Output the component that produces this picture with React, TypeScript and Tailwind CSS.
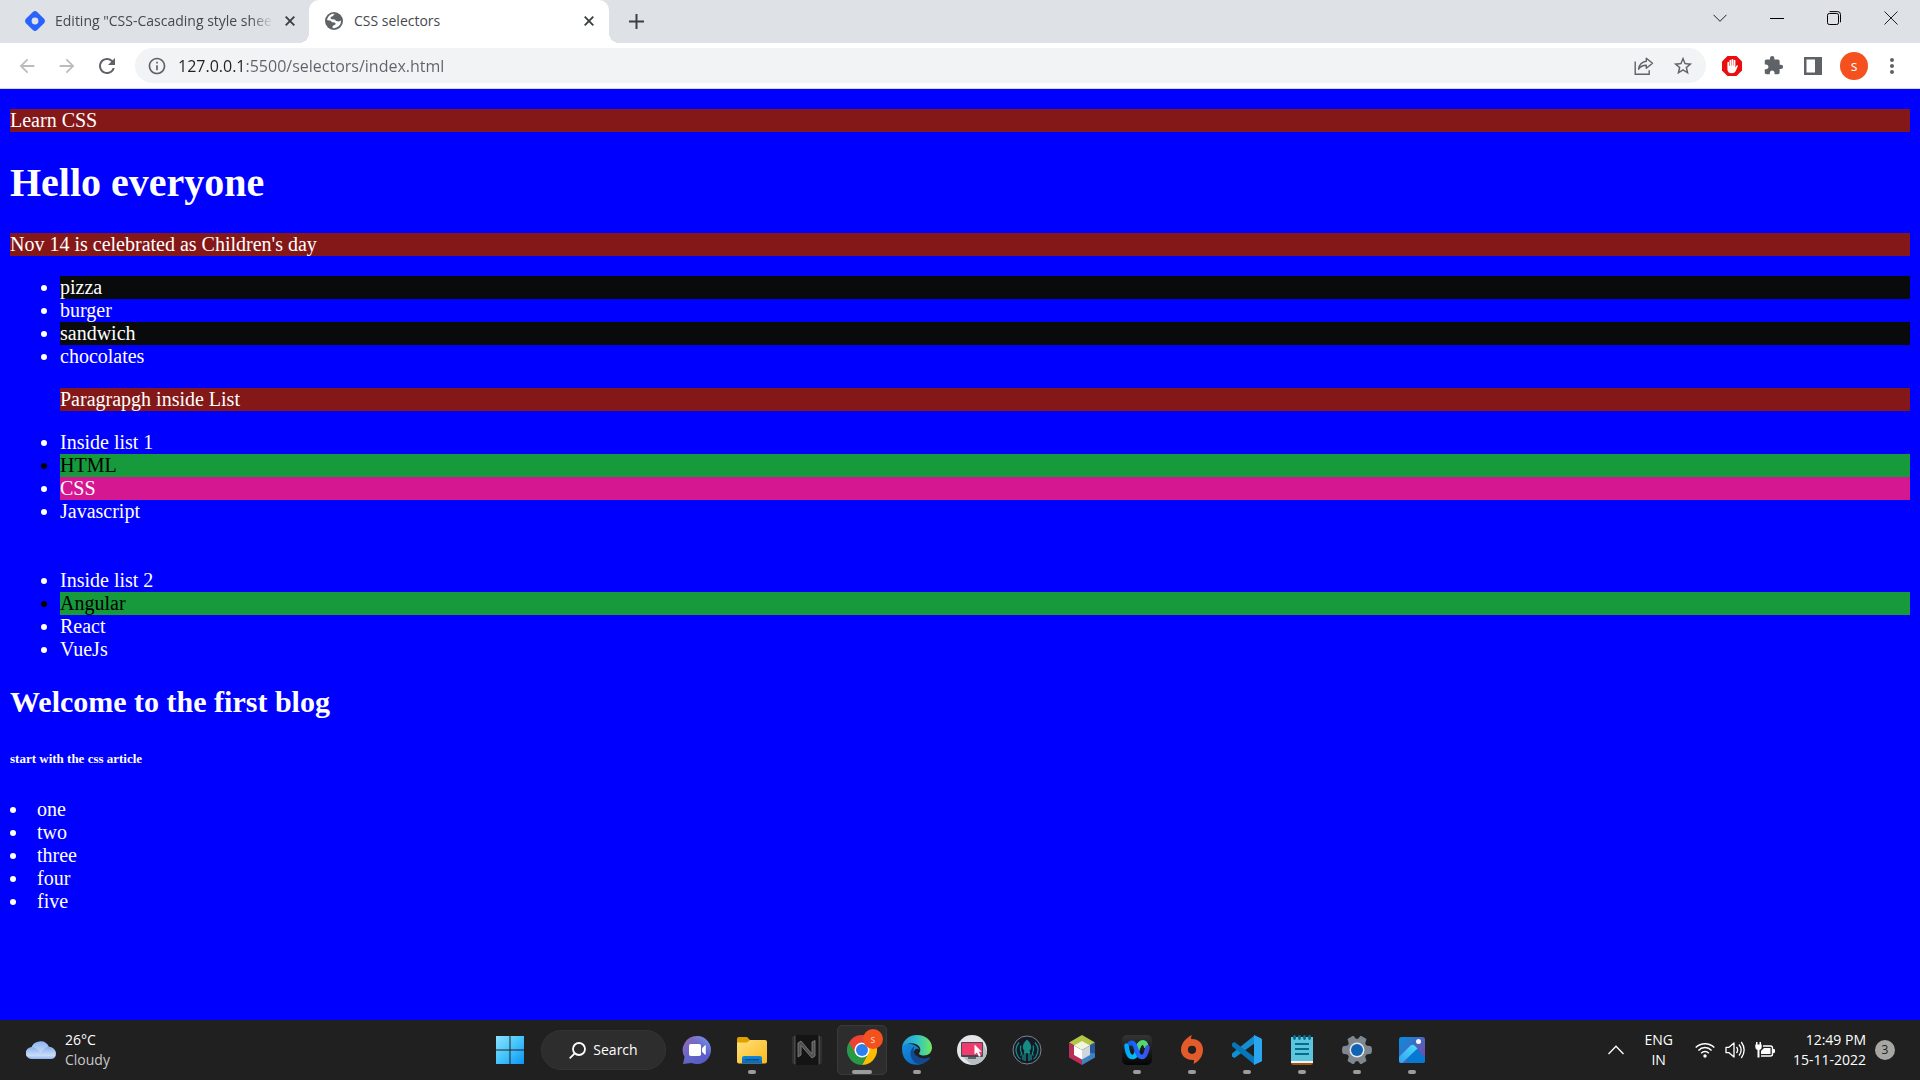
import { useState } from 'react';
import type { ReactNode } from 'react';
import { MdArrowBack, MdArrowForward, MdExtension, MdInfoOutline, MdMoreVert, MdRefresh, MdStarBorder } from 'react-icons/md';

const DiamondLogo = () => (
  <svg viewBox="0 0 20 20" className="size-5 shrink-0">
    <path d="M7.6 1.2a3.4 3.4 0 0 1 4.8 0l6.4 6.4a3.4 3.4 0 0 1 0 4.8l-6.4 6.4a3.4 3.4 0 0 1-4.8 0l-6.4-6.4a3.4 3.4 0 0 1 0-4.8z" fill="#2962ff" />
    <circle cx="10" cy="10" r="3.4" fill="#dee1e6" />
  </svg>
);

const Globe = () => (
  <svg viewBox="0 0 18 18" className="size-[18px] shrink-0">
    <circle cx="9" cy="9" r="9" fill="#5f6368" />
    <path d="M10 1.900Q8 2.500 8.200 4L5.800 5q-.9 1.600.8 2.200l3 .2 1.600 1.700 2.300.4q1.600-.2 2.600-.9A7.200 7.200 0 0 1 7.600 16v-2.100l2.800-1.500q.8-1.300-.9-1.800L7 10.300 5.600 8.700 1.900 8A7.200 7.200 0 0 1 10 1.900z" fill="#fff" />
  </svg>
);

const Cross = () => (
  <svg viewBox="0 0 10 10" className="size-[10px]" stroke="#3c4043" strokeWidth="1.9">
    <path d="M0.7 0.7l8.6 8.6M9.3 0.7L0.7 9.3" />
  </svg>
);

function TabStrip() {
  return (
    <div className="flex h-[43px] bg-[#dee1e6]">
      <div className="flex w-[309px] items-center pb-[2px] pl-[25px] pr-[9px]">
        <DiamondLogo />
        <button className="ml-[10px] whitespace-nowrap text-left text-[14px] text-[#45494d] [mask-image:linear-gradient(to_right,black_195px,transparent_218px)]">
          Editing "CSS-Cascading style shee
        </button>
        <button aria-label="Close tab" className="ml-auto flex size-5 items-center justify-center"><Cross /></button>
      </div>
      <div className="relative flex w-[300px] items-center rounded-t-[10px] bg-white pb-[2px] pl-4 pr-[10px]">
        <span className="absolute bottom-0 -left-[10px] size-[10px] bg-[radial-gradient(circle_at_0_0,#dee1e6_10px,#ffffff_10px)]" />
        <span className="absolute bottom-0 -right-[10px] size-[10px] bg-[radial-gradient(circle_at_100%_0,#dee1e6_10px,#ffffff_10px)]" />
        <Globe />
        <button className="ml-[11px] text-[14px] text-[#45494d]">CSS selectors</button>
        <button aria-label="Close tab" className="ml-auto flex size-5 items-center justify-center"><Cross /></button>
      </div>
      <button aria-label="New tab" className="ml-3 flex w-[30px] items-center justify-center">
        <svg viewBox="0 0 15 15" className="size-[15px]" stroke="#3c4043" strokeWidth="2"><path d="M7.5 0v15M0 7.5h15" /></svg>
      </button>
      <div className="ml-auto flex h-9 items-center">
        <button aria-label="Search tabs" className="flex w-[57px] justify-center">
          <svg viewBox="0 0 14 14" className="size-[14px]" fill="none" stroke="#202124"><path d="M0.5 3.8L7 10.3l6.5-6.5" /></svg>
        </button>
        <button aria-label="Minimize" className="flex w-[57px] justify-center">
          <svg viewBox="0 0 14 14" className="size-[14px]" stroke="#000"><path d="M0 7.5h14" /></svg>
        </button>
        <button aria-label="Restore" className="flex w-[57px] justify-center">
          <svg viewBox="0 0 14 14" className="size-[14px]" fill="none" stroke="#000">
            <rect x="0.5" y="2.5" width="11" height="11" rx="1.8" />
            <path d="M2.6 0.6h8a2.9 2.9 0 0 1 2.9 2.9v7.8" />
          </svg>
        </button>
        <button aria-label="Close" className="flex w-[58px] justify-center">
          <svg viewBox="0 0 14 14" className="size-[14px]" stroke="#202124"><path d="M0.5 0.5l13 13M13.5 0.5l-13 13" /></svg>
        </button>
      </div>
    </div>
  );
}

function Toolbar() {
  const [url, setUrl] = useState('127.0.0.1:5500/selectors/index.html');

  return (
    <div className="flex h-[46px] items-center border-b border-[#d5d7da] bg-white pl-4 pr-4 text-[#5f6368]">
      <button aria-label="Back" className="mr-[18px] text-[#babcbe]"><MdArrowBack className="size-[22px]" /></button>
      <button aria-label="Forward" className="mr-[17px] text-[#babcbe]"><MdArrowForward className="size-[22px]" /></button>
      <button aria-label="Reload"><MdRefresh className="size-6" /></button>
      <div className="ml-4 flex h-[35px] flex-1 items-center gap-[18px] rounded-full bg-[#f1f3f4] pl-3 pr-3">
        <button aria-label="Site information"><MdInfoOutline className="size-5" /></button>
        <input
          aria-label="Address"
          className="-ml-[7px] min-w-0 flex-1 bg-[linear-gradient(to_right,#202124_68px,#5f6368_68px)] bg-clip-text text-[16px] text-transparent outline-none"
          value={url}
          onChange={e => setUrl(e.target.value)}
        />
        <button aria-label="Share">
          <svg viewBox="0 0 20 20" className="size-5" fill="none" stroke="#5f6368" strokeWidth="1.4">
            <path d="M1.2 5.5v12.8h14v-4" />
            <path d="M12.3 2.2l6.2 5-6.2 5V9.3c-3.6 0-6 1.2-7.7 3.9.5-4.4 3-7.4 7.7-8z" strokeLinejoin="round" />
          </svg>
        </button>
        <button aria-label="Bookmark"><MdStarBorder className="size-[22px]" /></button>
      </div>
      <div className="ml-[15px] flex items-center gap-5">
        <button aria-label="Ad blocker">
          <svg viewBox="0 0 22 22" className="size-[22px]">
            <path d="M6.5 1h9L21 6.500v9L15.500 21h-9L1 15.500v-9z" fill="#eb0d0d" />
            <path d="M6.400 12V7.200q.8-1 1.600 0V11h.5V5.200q.8-1 1.700 0V10.500h.4V4.400q.8-1 1.700 0V10.500h.4V5.300q.9-1 1.700 0v7.200l1.200-2q1-.7 1.400.3l-2.400 5.400q-1.100 2-3.800 2-4.400 0-4.400-4.200z" fill="#fff" />
          </svg>
        </button>
        <button aria-label="Extensions"><MdExtension className="size-[21px]" /></button>
        <button aria-label="Side panel">
          <svg viewBox="0 0 18 18" className="size-[18px]">
            <path d="M0 0h18v18H0zM2.500 2.500v13H11v-13z" fill="#5f6368" fillRule="evenodd" />
          </svg>
        </button>
        <button className="ml-[-2px] flex size-7 items-center justify-center rounded-full bg-[#f4511e] text-[14px] text-white">s</button>
        <button aria-label="Menu" className="-ml-2"><MdMoreVert className="size-6" /></button>
      </div>
    </div>
  );
}

function Page() {
  return (
    <main className="flex-1 bg-[#0000ff] px-[10px] pt-5 font-['Liberation_Serif','Times_New_Roman',serif] text-[20px] leading-[23px] text-white">
      <p className="bg-[#841818]">Learn CSS</p>
      <h1 className="my-[27px] text-[40px] font-bold leading-[47px]">Hello everyone</h1>
      <p className="bg-[#841818]">Nov 14 is celebrated as Children's day</p>
      <ul className="mt-5 list-disc pl-[50px]">
        <li className="bg-[#080a0b]">pizza</li>
        <li>burger</li>
        <li className="bg-[#080a0b]">sandwich</li>
        <li>chocolates</li>
        <p className="my-5 bg-[#841818]">Paragrapgh inside List</p>
        <li>Inside list 1</li>
        <li className="bg-[#179a3c] text-black">HTML</li>
        <li className="bg-[#d61792]">CSS</li>
        <li>Javascript</li>
        <br />
        <br />
        <li>Inside list 2</li>
        <li className="bg-[#179a3c] text-black">Angular</li>
        <li>React</li>
        <li>VueJs</li>
      </ul>
      <h2 className="mt-6 mb-8 text-[30px] font-bold leading-[34px]">Welcome to the first blog</h2>
      <h6 className="mb-[31px] text-[13px] font-bold leading-4">start with the css article</h6>
      <ul className="list-inside list-disc">
        <li>one</li>
        <li>two</li>
        <li>three</li>
        <li>four</li>
        <li>five</li>
      </ul>
    </main>
  );
}

const Icon = ({ children }: { children: ReactNode }) => (
  <svg viewBox="0 0 30 30" className="size-[30px]">{children}</svg>
);

const apps = [
  {
    name: 'Chat',
    icon: (
      <Icon>
        <defs>
          <linearGradient id="chat" x1="0" y1="0" x2="1" y2="1">
            <stop offset="0" stopColor="#9a6cb8" />
            <stop offset="0.5" stopColor="#6264c8" />
            <stop offset="1" stopColor="#5558c8" />
          </linearGradient>
          <linearGradient id="chatEdge" x1="0" y1="1" x2="1" y2="0">
            <stop offset="0.6" stopColor="#7a9cf0" stopOpacity="0" />
            <stop offset="1" stopColor="#7aa2f5" />
          </linearGradient>
        </defs>
        <path d="M15 1a14 14 0 1 1-5.500 26.900L1 29l1.600-7A14 14 0 0 1 15 1z" fill="url(#chat)" />
        <path d="M15 1a14 14 0 1 1-5.500 26.900L1 29l1.600-7A14 14 0 0 1 15 1z" fill="url(#chatEdge)" />
        <rect x="7" y="9" width="12" height="12" rx="1.800" fill="#fff" />
        <path d="M20 13.200l3-2.900q.8-.4.8.6v8.200q0 1-.8.6l-3-2.900z" fill="#fff" />
      </Icon>
    )
  },
  {
    name: 'File Explorer',
    running: true,
    icon: (
      <Icon>
        <defs>
          <linearGradient id="folder" x1="0" y1="0" x2="1" y2="1"><stop stopColor="#ffe07a" /><stop offset="1" stopColor="#fbb91a" /></linearGradient>
          <linearGradient id="folderPocket" x1="0" y1="0" x2="0" y2="1"><stop stopColor="#1287d8" /><stop offset="1" stopColor="#0b67b5" /></linearGradient>
        </defs>
        <path d="M0 4q0-2 2-2h8l3 3v5H0z" fill="#e0a000" />
        <path d="M0 7.500h10L13 5h15q2 0 2 2v19.500q0 2-2 2H2q-2 0-2-2z" fill="url(#folder)" />
        <path d="M5 28.500v-5.500q0-2 2-2h16q2 0 2 2v5.500z" fill="url(#folderPocket)" />
        <path d="M8 24.700h14" stroke="#064f91" strokeWidth="1.300" />
      </Icon>
    )
  },
  {
    name: 'Nitro',
    icon: (
      <Icon>
        <path d="M0 2l4-2v30l-4-2zM30 2l-4-2v30l4-2z" fill="#303030" />
        <path d="M2.500 1v28M27.500 1v28" stroke="#555" strokeWidth="0.700" />
        <rect x="4" width="22" height="30" fill="#141414" />
        <path d="M6 22V8l3-2 11 13V7l3-1.500V21l-3 2L9 10.500V20z" fill="#505050" stroke="#858585" strokeWidth="0.800" />
      </Icon>
    )
  },
  {
    name: 'Chrome',
    running: true,
    active: true,
    icon: (
      <Icon>
        <path d="M28 7.500A15 15 0 0 1 15 30l6-11.500 1-11z" fill="#fbbc04" />
        <path d="M2 7.500A15 15 0 0 0 15 30l6.100-11.500-6.100-3.500z" fill="#279a48" />
        <path d="M2 7.500A15 15 0 0 1 28 7.500H15l-6.500 11z" fill="#ea4335" />
        <circle cx="15" cy="15" r="7.500" fill="#fff" />
        <circle cx="15" cy="15" r="6" fill="#2d7ff0" />
      </Icon>
    )
  },
  {
    name: 'Edge',
    running: true,
    icon: (
      <Icon>
        <defs>
          <linearGradient id="edgeTop" x1="0" y1="0.500" x2="1" y2="0.500"><stop stopColor="#229ade" /><stop offset="0.500" stopColor="#2fc2c9" /><stop offset="1" stopColor="#72e85c" /></linearGradient>
          <linearGradient id="edgeLeft" x1="0" y1="0" x2="0.700" y2="1"><stop stopColor="#168fdc" /><stop offset="1" stopColor="#0b68c5" /></linearGradient>
        </defs>
        <path d="M0 14C0 5.800 6.500 0 15 0c9 0 15 6 15 12.500 0 5-3.700 8-8 8-3.800 0-5.400-1.500-4.800-2.600 1.500-1.800 1.500-4 .3-6C14 6.500 3 7 0 14z" fill="url(#edgeTop)" />
        <path d="M0 14C1.500 8.500 7 8 11 9.500c4.500 1.500 6.500 4.500 6.500 5.500-2-2.500-6-.8-6 4 0 5 5 9.500 10.500 9-8 4.500-22 1-22-14z" fill="url(#edgeLeft)" />
        <path d="M12.500 11.200c-3.700 2.100-5.600 7.500-2.500 12.800 2.700 4.500 7.500 6.200 12 4.100 3-1.300 5-3 6.200-5 .4-.8-.1-1.200-.8-.8-5 2.500-12.400.8-15-4-1.200-2.600-.8-5.200.1-7.100z" fill="#124a91" />
      </Icon>
    )
  },
  {
    name: 'Screen Recorder',
    icon: (
      <Icon>
        <circle cx="15" cy="15" r="15" fill="#e3e5e8" />
        <path d="M6 22l9 8a15 15 0 0 0 15-13l-4-9z" fill="#b9bec4" />
        <rect x="4" y="7" width="22" height="15" rx="1" fill="#454a52" />
        <rect x="5" y="8" width="20" height="12" fill="#ef3b6e" />
        <path d="M11 22h8v2h-8z" fill="#60656d" />
        <path d="M17.500 9.500v10l2.400-2 2 4.300 1.900-.9-2-4.200h3z" fill="#fff" />
      </Icon>
    )
  },
  {
    name: 'GitKraken',
    icon: (
      <Icon>
        <circle cx="15" cy="15" r="14" fill="#141926" stroke="#7c8490" />
        <path d="M15 4.500c3 3 4.200 5.200 4.200 8q0 2-1.600 3.300l.7 2.500h-6.600l.7-2.500q-1.600-1.300-1.600-3.300c0-2.800 1.200-5 4.200-8z" fill="#158d85" />
        <path d="M13 18v8M17 18v8M11 19.500v5.800M19 19.500v5.800M8.500 20.500q1.800-1.500.5-4-1-3 0-6M21.500 20.500q-1.800-1.500-.5-4 1-3 0-6M7 7.500Q1.500 13.500 6 21.500q1.300 2 2.500 2.500M23 7.500q5.500 6 1 14-1.300 2-2.500 2.500" fill="none" stroke="#158d85" strokeWidth="1.300" />
      </Icon>
    )
  },
  {
    name: 'NetBeans',
    icon: (
      <Icon>
        <path d="M15 0l13 7.500-6 3.500L15 7.500 8 11 2 7.500z" fill="#b2c746" />
        <path d="M2 7.500l6 3.500v9l7 4v6L2 22.500z" fill="#b92e55" />
        <path d="M28 7.500v15L15 30v-6l7-4v-9z" fill="#3d83c4" />
        <path d="M28 7.500v11l-6-1V11z" fill="#28589b" />
        <path d="M15 6l8 4.500L15 15l-8-4.500z" fill="#f2f5dd" />
        <path d="M7 10.500l8 4.500v9.500L7 20z" fill="#fff" />
        <path d="M23 10.500L15 15v9.500l8-4.500z" fill="#ced7df" />
      </Icon>
    )
  },
  {
    name: 'Webex',
    running: true,
    icon: (
      <Icon>
        <defs>
          <linearGradient id="webexTile" x1="0" y1="0" x2="0" y2="1"><stop stopColor="#343434" /><stop offset="1" stopColor="#050505" /></linearGradient>
          <linearGradient id="webexLeft" x1="0" y1="0" x2="1" y2="0"><stop stopColor="#00a8ff" /><stop offset="1" stopColor="#19d8dd" /></linearGradient>
          <linearGradient id="webexRight" x1="0" y1="0" x2="1" y2="0"><stop stopColor="#135ff2" /><stop offset="0.600" stopColor="#2469ff" /><stop offset="1" stopColor="#3e4ee8" /></linearGradient>
        </defs>
        <rect width="30" height="30" rx="5" fill="url(#webexTile)" />
        <path d="M4.500 10.500C5.300 18 7 22 10.300 22c3.200 0 4.200-3.500 5.200-7.500 1-4.500 2.500-7 5.500-7q2.500.2 3 3.500" fill="none" stroke="url(#webexLeft)" strokeWidth="4.600" strokeLinecap="round" />
        <path d="M16.500 11.500c1-2.800 2.300-4 4.500-4q2.500.2 3 3.500" fill="none" stroke="#55d868" strokeWidth="4.600" strokeLinecap="round" />
        <path d="M8 8.300q4.300-1.800 6 5.200Q16 22 19.700 22q4 0 5.800-9.500" fill="none" stroke="url(#webexRight)" strokeWidth="4.600" strokeLinecap="round" />
      </Icon>
    )
  },
  {
    name: 'Origin',
    running: true,
    icon: (
      <Icon>
        <path fillRule="evenodd" d="M15 0c-.8 1.500-1 2.600-1 4h1c6.500 0 11 4.500 11 10.800C26 22 21 27 16.500 29c.5-1.200.7-2.600.5-4-7 .8-13-3.700-13-10.200C4 8 9.500 2.500 15 0zM15 10.700a4.100 4.100 0 1 0 0 8.200 4.100 4.100 0 0 0 0-8.200z" fill="#e45b2b" />
      </Icon>
    )
  },
  {
    name: 'Visual Studio Code',
    running: true,
    icon: (
      <Icon>
        <path d="M0 18.500v3L2.500 23 23 8V0z" fill="#148dd1" />
        <path d="M0 8.500L2.500 7 23 22.500V30L0 11.300z" fill="#0877b9" />
        <path d="M22 0l7 3.200q1 .5 1 1.500v20.600q0 1-1 1.500L22 30z" fill="#2aa6f0" />
      </Icon>
    )
  },
  {
    name: 'Notepad',
    running: true,
    icon: (
      <Icon>
        <path d="M4 2h22v26q0 2-2 2H6q-2 0-2-2z" fill="#a4530c" />
        <path d="M4 2h22v26H4z" fill="#f2f2f2" />
        <path d="M4 2h22v24H4z" fill="#5cc6df" />
        <path d="M8 9h14M8 14h14M8 19h14" stroke="#086b8c" strokeWidth="1.800" />
        <path d="M7.500 1.500v2M12.500 1.500v2M17.500 1.500v2M22.500 1.500v2" stroke="#08708f" strokeWidth="2.800" strokeLinecap="round" />
      </Icon>
    )
  },
  {
    name: 'Settings',
    running: true,
    icon: (
      <Icon>
        <path d="M10.500 1h1.300l2 2.700h2.400l2-2.700h1.300l5 2.900-1.300 4.600 1.300 2 4.500.8.900 2v3.400l-.9 2-4.500.8-1.300 2 1.300 4.600-5 2.900h-1.300l-2-2.700h-2.400l-2 2.700h-1.300l-5-2.900 1.300-4.600-1.300-2-4.500-.8-.9-2v-3.400l.9-2 4.500-.8 1.300-2-1.300-4.600z" fill="#7f8890" />
        <circle cx="15" cy="15" r="7.500" fill="#e5e8eb" />
        <circle cx="15" cy="15" r="6" fill="#0f62b4" />
      </Icon>
    )
  },
  {
    name: 'Photos',
    running: true,
    icon: (
      <Icon>
        <defs>
          <linearGradient id="sky" x1="0.300" y1="0" x2="1" y2="0.600"><stop stopColor="#1684d8" /><stop offset="1" stopColor="#744dad" /></linearGradient>
          <linearGradient id="hill" x1="0" y1="1" x2="1" y2="0"><stop stopColor="#2ca4f2" /><stop offset="1" stopColor="#53dcf8" /></linearGradient>
          <clipPath id="photoFrame"><rect x="2" y="2" width="26" height="26" rx="2.500" /></clipPath>
        </defs>
        <g clipPath="url(#photoFrame)">
          <rect x="2" y="2" width="26" height="26" fill="url(#sky)" />
          <path d="M8 28l8-14q2-2.500 4 0l9 9v5z" fill="#0879d2" />
          <path d="M2 22l11.500-11.500q2-1.500 4 0l3 3L5 28H2z" fill="url(#hill)" />
        </g>
        <circle cx="21.500" cy="6.500" r="2.500" fill="#f7f7fa" />
      </Icon>
    )
  }
];

function Taskbar() {
  return (
    <footer className="grid h-[60px] grid-cols-[1fr_auto_1fr] items-center bg-[#202020] text-[14px] leading-5 text-white">
      <button className="flex items-center gap-[9px] justify-self-start pl-[26px] text-left">
        <svg viewBox="0 0 30 20" className="w-[30px]">
          <defs>
            <linearGradient id="cloud" x1="0" y1="0" x2="0" y2="1"><stop stopColor="#8fb6ef" /><stop offset="1" stopColor="#d3e2fa" /></linearGradient>
            <linearGradient id="cloudFront" x1="0" y1="0" x2="0" y2="1"><stop stopColor="#86aeea" /><stop offset="0.700" stopColor="#c9dcf8" /><stop offset="1" stopColor="#8fb7f2" /></linearGradient>
          </defs>
          <path d="M5 9a9.500 9.500 0 0 1 18-2l-3 9H7z" fill="url(#cloud)" />
          <path d="M6 19a6 6 0 1 1 3-11q4 1.500 5 5l6-5.500a7 7 0 0 1 10 5.500q0 6-5.500 6z" fill="url(#cloudFront)" />
        </svg>
        <span>26°C<br /><span className="text-[#c8c8c8]">Cloudy</span></span>
      </button>

      <div className="flex items-center gap-[5px] pl-[2px]">
        <button aria-label="Start" className="flex size-[50px] items-center justify-center">
          <Icon>
            <defs>
              <linearGradient id="start" gradientUnits="userSpaceOnUse" x1="1" y1="1" x2="29" y2="29"><stop stopColor="#8be2ff" /><stop offset="0.500" stopColor="#45c4fb" /><stop offset="1" stopColor="#0b94f5" /></linearGradient>
            </defs>
            <path d="M1 1h13.500v13.500H1zM15.500 1H29v13.500H15.500zM1 15.500h13.500V29H1zM15.500 15.500H29V29H15.500z" fill="url(#start)" />
          </Icon>
        </button>
        <button className="mx-px flex h-10 w-[125px] items-center justify-center gap-[7px] rounded-full border border-[#343434] bg-[#2d2d2d]">
          <svg viewBox="0 0 17 17" className="size-[17px]" fill="none" stroke="#fff" strokeWidth="1.800">
            <circle cx="10" cy="7" r="6" />
            <path d="M5.700 11.300L0.700 16.300" />
          </svg>
          Search
        </button>
        {apps.map(app => (
          <button
            key={app.name}
            aria-label={app.name}
            className={`relative flex size-[50px] items-center justify-center rounded-[5px] border ${app.active ? 'border-[#3a3a3a] bg-[#2d2d2d]' : 'border-transparent'}`}
          >
            {app.icon}
            {app.active && (
              <span className="absolute right-[3px] top-[3px] flex size-5 items-center justify-center rounded-full bg-[#f4511e] text-[10px] text-[#ffd8cc]">s</span>
            )}
            {app.running && (
              <span className={`absolute bottom-0 h-1 rounded-full bg-[#9c9c9c] ${app.active ? 'w-5' : 'w-2'}`} />
            )}
          </button>
        ))}
      </div>

      <div className="flex items-center justify-self-end pr-[25px]">
        <button aria-label="Hidden icons" className="mr-5">
          <svg viewBox="0 0 16 10" className="w-4" fill="none" stroke="#fff" strokeWidth="1.300"><path d="M0.500 9L8 1.300 15.500 9" /></svg>
        </button>
        <button className="mr-[22px] text-center">ENG<br />IN</button>
        <button aria-label="Network, volume and battery" className="mr-[18px] flex items-center gap-[10px]">
          <svg viewBox="0 0 20 16" className="w-5" fill="none" stroke="#fff" strokeWidth="1.500">
            <path d="M0.700 5.600a13 13 0 0 1 18.600 0M3.400 8.400a9.200 9.200 0 0 1 13.200 0M6.200 11.200a5.300 5.300 0 0 1 7.600 0" />
            <circle cx="10" cy="14" r="1.700" fill="#fff" stroke="none" />
          </svg>
          <svg viewBox="0 0 20 18" className="w-5" fill="none" stroke="#fff" strokeWidth="1.300">
            <path d="M1 6.300h3L9 2v14l-5-4.300H1z" strokeLinejoin="round" />
            <path d="M11.500 6q2.300 3 0 6M14 3.500q4.300 5.500 0 11M16.300 1q5.700 8 0 16" />
          </svg>
          <svg viewBox="0 0 20 16" className="w-5">
            <path d="M8 4h7.500q2 0 2 2v6q0 2-2 2H6" fill="none" stroke="#fff" strokeWidth="1.400" />
            <path d="M9 6h6.500v6H6V9zM18 7h1q1 0 1 1v2q0 1-1 1h-1zM1 0h1.500v2.500h2V0H6v2.500h.7V5q0 2.500-2.200 3v7.500h-2V8Q.300 7.500.300 5V2.500H1z" fill="#fff" />
          </svg>
        </button>
        <button className="text-right">12:49 PM<br />15-11-2022</button>
        <button aria-label="3 notifications" className="ml-[9px] flex size-5 items-center justify-center rounded-full bg-[#a6a6a2] text-[12px] text-[#202020]">3</button>
      </div>
    </footer>
  );
}

export default function App() {
  return (
    <div className="flex min-h-screen flex-col font-['Segoe_UI','Open_Sans',sans-serif]">
      <TabStrip />
      <Toolbar />
      <Page />
      <Taskbar />
    </div>
  );
}
